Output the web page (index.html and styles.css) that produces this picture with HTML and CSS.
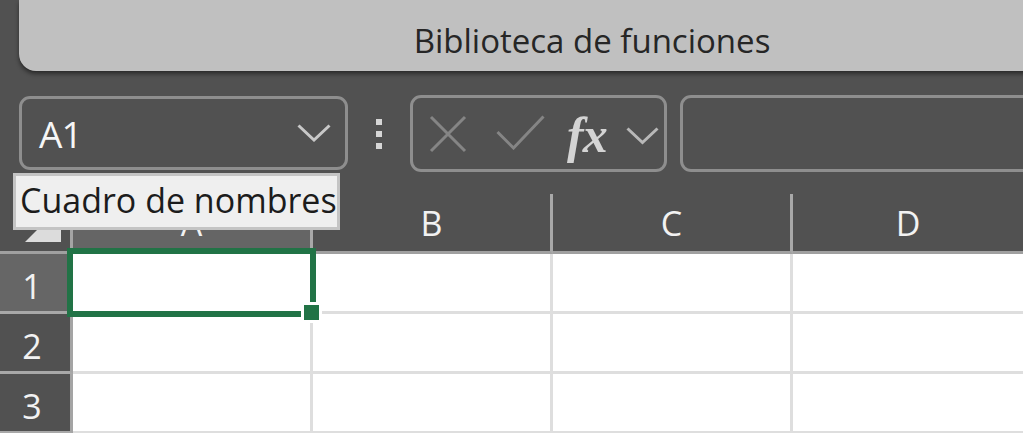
FILE: index.html
```html
<!DOCTYPE html>
<html lang="es">
<head>
<meta charset="utf-8">
<title>Cuadro de nombres</title>
<link rel="stylesheet" href="styles.css">
</head>
<body>
<div class="app">
  <div class="ribbon">
    <div class="group"><span class="group-label">Biblioteca de funciones</span></div>
  </div>

  <div class="fbar">
    <div class="namebox">
      <span class="ref">A1</span>
      <svg class="chev" width="34" height="18" viewBox="0 0 34 18"><polyline points="1.5,1.5 17,16 32.5,1.5" fill="none" stroke="#c8c8c8" stroke-width="3"/></svg>
    </div>
    <div class="grip"><i></i><i></i><i></i></div>
    <div class="fbtns">
      <svg class="ic-x" width="38" height="38" viewBox="0 0 38 38"><path d="M2 2 L36 36 M36 2 L2 36" stroke="#858585" stroke-width="3" fill="none"/></svg>
      <svg class="ic-ok" width="49" height="35" viewBox="0 0 49 35"><polyline points="1.5,17 17.5,33 47.5,1.5" fill="none" stroke="#858585" stroke-width="3"/></svg>
      <span class="fx">fx</span>
      <svg class="chev-s" width="33" height="18" viewBox="0 0 33 18"><polyline points="1.5,1.5 16.5,15.5 31.5,1.5" fill="none" stroke="#b8b8b8" stroke-width="3"/></svg>
    </div>
    <div class="finput"></div>
  </div>

  <div class="sheet">
    <div class="corner"><svg class="selall" width="40" height="40" viewBox="0 0 40 40"><polygon points="37,0 37,36 1,36" fill="#dcdcdc"/></svg></div>
    <div class="colh sel">A</div>
    <div class="colh">B</div>
    <div class="colh">C</div>
    <div class="colh last">D</div>

    <div class="rowh sel">1</div>
    <div class="cell"></div><div class="cell"></div><div class="cell"></div><div class="cell last"></div>

    <div class="rowh">2</div>
    <div class="cell"></div><div class="cell"></div><div class="cell"></div><div class="cell last"></div>

    <div class="rowh">3</div>
    <div class="cell"></div><div class="cell"></div><div class="cell"></div><div class="cell last"></div>

    <div class="selection"></div>
    <div class="handle"></div>
  </div>

  <div class="tooltip">Cuadro de nombres</div>
</div>
</body>
</html>
```

FILE: styles.css
```css
* { box-sizing: border-box; }

html, body {
  margin: 0;
  padding: 0;
  width: 1023px;
  height: 433px;
  overflow: hidden;
  background: #515151;
  font-family: "Open Sans", "Noto Sans", sans-serif;
}

.app {
  position: relative;
  width: 1023px;
  height: 433px;
  overflow: hidden;
  display: flex;
  flex-direction: column;
}

/* ribbon group */
.ribbon {
  height: 71px;
  flex-shrink: 0;
  padding-left: 19px;
}
.group {
  width: 1146px;
  height: 71px;
  background: #c0c0c0;
  border-bottom-left-radius: 17px;
  box-shadow: 0 1px 0 #2e2e2e, 0 3px 4px rgba(0, 0, 0, 0.45);
  display: flex;
  justify-content: center;
  padding-top: 18px;
}
.group-label {
  font-size: 33px;
  line-height: 45px;
  color: #262626;
}

/* formula bar */
.fbar {
  margin-top: 24px;
  height: 77px;
  flex-shrink: 0;
  display: flex;
  align-items: flex-start;
  padding-left: 19px;
  margin-right: -30px;
}
.namebox {
  margin-top: 1px;
  width: 329px;
  height: 74px;
  border: 3px solid #8e8e8e;
  border-radius: 11px;
  display: flex;
  align-items: center;
  padding-left: 17px;
  padding-right: 14px;
}
.ref {
  flex: 1;
  font-size: 37px;
  color: #f6f6f6;
  line-height: 1;
  letter-spacing: -1px;
}

.grip {
  margin-left: 28px;
  margin-top: 24px;
  display: flex;
  flex-direction: column;
  gap: 6px;
}
.grip i {
  display: block;
  width: 6px;
  height: 6px;
  background: #d6d6d6;
}

.fbtns {
  margin-left: 28px;
  width: 257px;
  height: 77px;
  border: 3px solid #8e8e8e;
  border-radius: 11px;
  display: flex;
  align-items: center;
  padding-left: 16px;
}
.ic-x { flex-shrink: 0; }
.ic-ok { margin-left: 29px; margin-top: -3px; flex-shrink: 0; }
.fx {
  margin-left: 22px;
  width: 54px;
  font-family: "Liberation Serif", "DejaVu Serif", serif;
  font-style: italic;
  font-weight: bold;
  font-size: 50px;
  line-height: 1;
  color: #d4d4d4;
  letter-spacing: -1px;
  margin-top: 2px;
}
.chev-s { margin-left: 5px; margin-top: 4px; flex-shrink: 0; }

.finput {
  margin-left: 13px;
  flex: 1;
  height: 77px;
  border: 3px solid #8e8e8e;
  border-radius: 11px;
}

/* sheet grid */
.sheet {
  position: relative;
  margin-top: 22px;
  display: grid;
  grid-template-columns: 73px 240px 240px 240px 1fr;
  grid-template-rows: 60px 60px 60px 60px;
  flex-shrink: 0;
}
.corner {
  position: relative;
  border-right: 3px solid #a4a4a4;
  border-bottom: 3px solid #a0a0a0;
}
.selall {
  position: absolute;
  left: 24px;
  top: 12px;
}
.colh {
  border-right: 3px solid #a8a8a8;
  border-bottom: 3px solid #a0a0a0;
  display: flex;
  align-items: center;
  justify-content: center;
  font-size: 34px;
  color: #f2f2f2;
}
.colh.sel { background: #656565; }
.colh.last { border-right: none; }

.rowh {
  border-right: 3px solid #a4a4a4;
  border-bottom: 3px solid #a8a8a8;
  display: flex;
  align-items: center;
  justify-content: center;
  padding-right: 6px;
  padding-top: 6px;
  font-size: 34px;
  color: #f2f2f2;
}
.rowh.sel { background: #666666; }

.cell {
  background: #ffffff;
  border-right: 3px solid #dedede;
  border-bottom: 3px solid #dedede;
}
.cell.last { border-right: none; }

.selection {
  position: absolute;
  left: 67px;
  top: 54px;
  width: 249px;
  height: 69px;
  border: 6px solid #217346;
}
.handle {
  position: absolute;
  left: 301px;
  top: 108px;
  width: 21px;
  height: 21px;
  background: #217346;
  border: 3px solid #ffffff;
}

/* tooltip */
.tooltip {
  position: absolute;
  left: 13px;
  top: 173px;
  width: 327px;
  height: 57px;
  background: #efefef;
  border: 3px solid #c4c4c4;
  font-size: 34px;
  line-height: 1;
  color: #1c1c1c;
  padding-left: 4px;
  padding-top: 7px;
  white-space: nowrap;
}
```
